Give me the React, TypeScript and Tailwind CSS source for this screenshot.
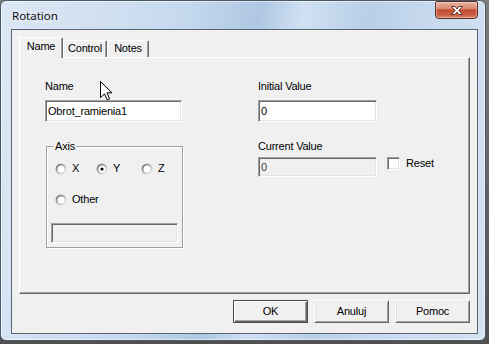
import React from "react";

function Radio({ checked }: { checked?: boolean }) {
  return (
    <svg width="12" height="12" viewBox="0 0 12 12" className="shrink-0">
      <defs>
        <linearGradient id="rg" x1="0" y1="0" x2="1" y2="1">
          <stop offset="0" stopColor="#808080" />
          <stop offset="0.5" stopColor="#b0b0b0" />
          <stop offset="1" stopColor="#ffffff" />
        </linearGradient>
        <linearGradient id="rg2" x1="0" y1="0" x2="1" y2="1">
          <stop offset="0" stopColor="#505050" />
          <stop offset="0.55" stopColor="#c8c8c8" />
          <stop offset="1" stopColor="#e8e8e8" />
        </linearGradient>
      </defs>
      <circle cx="6" cy="6" r="5.5" fill="url(#rg)" />
      <circle cx="6" cy="6" r="4.5" fill="url(#rg2)" />
      <circle cx="6" cy="6" r="3.5" fill="#ffffff" />
      {checked && <circle cx="6" cy="6" r="1.6" fill="#000" />}
    </svg>
  );
}

const sunken =
  "border border-t-[#a0a0a0] border-l-[#a0a0a0] border-r-white border-b-white shadow-[inset_1px_1px_0_#696969,inset_-1px_-1px_0_#e3e3e3]";

function Btn({ label, def }: { label: string; def?: boolean }) {
  return (
    <div
      className={
        def
          ? "w-[75px] h-[23px] flex items-center justify-center bg-[#f0f0f0] border border-[#4a4a4a] shadow-[inset_1px_1px_0_#ffffff,inset_-1px_-1px_0_#696969,inset_-2px_-2px_0_#a0a0a0]"
          : "w-[75px] h-[23px] flex items-center justify-center bg-[#f0f0f0] border border-t-white border-l-white border-r-[#696969] border-b-[#696969] shadow-[inset_1px_1px_0_#e3e3e3,inset_-1px_-1px_0_#a0a0a0]"
      }
    >
      <span className="leading-[13px]">{label}</span>
    </div>
  );
}

export default function App() {
  return (
    <div className="relative w-[489px] h-[344px] bg-[linear-gradient(180deg,#7c7c7c,#505050)] overflow-hidden font-['Liberation_Sans',Arial,sans-serif] text-[11px] tracking-[-0.2px] text-black">
      <div className="relative w-[486px] h-[341px] rounded-[6px] border border-[#4d5866] bg-[linear-gradient(100deg,#dbe7f4_0%,#d0e0f1_20%,#c4d8ee_35%,#afc7e3_48%,#cfe0f2_56%,#b9cfe8_68%,#c9dbef_82%,#d5e3f2_100%)] shadow-[inset_0_0_0_1px_rgba(255,255,255,0.55)] flex flex-col">
        {/* title bar */}
        <div className="h-[28px] flex items-start justify-between shrink-0">
          <div className="pl-[11px] pt-[7px] font-['Noto_Sans',sans-serif] text-[11.5px] tracking-normal leading-[16px] text-[#0d0d0d] [text-shadow:0_0_6px_#ffffff]">
            Rotation
          </div>
          <div className="mr-[7px] w-[43px] h-[18px] rounded-b-[4px] rounded-t-[2px] border border-[#5b2a22] bg-[linear-gradient(180deg,#eab2a4_0%,#dc8b76_40%,#c24a33_50%,#cc5d44_80%,#d98a6f_100%)] shadow-[inset_0_0_0_1px_rgba(255,255,255,0.35)] flex items-center justify-center">
            <svg width="14" height="11" viewBox="0 0 14 11">
              <path
                d="M1.5 1.5 H5 L7 4 L9 1.5 H12.5 L8.8 5.5 L12.5 9.5 H9 L7 7 L5 9.5 H1.5 L5.2 5.5 Z"
                fill="#ffffff"
                stroke="#4a2a26"
                strokeWidth="0.9"
                strokeLinejoin="round"
              />
            </svg>
          </div>
        </div>
        {/* client */}
        <div className="ml-[10px] mr-[7px] mb-[6px] flex-1 border border-[#5a6572] bg-[#f0f0f0] flex flex-col px-[7px] pt-[7px]">
          {/* tabs */}
          <div className="flex items-end h-[20px]">
            <div className="relative z-10 -mb-px h-[21px] w-[44px] bg-[#f0f0f0] border-l border-t border-r border-l-white border-t-white border-r-[#696969] rounded-tr-[2px] shadow-[inset_-1px_0_0_#a0a0a0] flex justify-center pt-[2px]">
              <span className="leading-[13px]">Name</span>
            </div>
            <div className="h-[17px] w-[44px] border-l border-t border-r border-l-white border-t-white border-r-[#696969] rounded-tr-[2px] shadow-[inset_-1px_0_0_#a0a0a0] flex justify-center pt-[1px]">
              <span className="leading-[13px]">Control</span>
            </div>
            <div className="h-[17px] w-[42px] border-l border-t border-r border-l-white border-t-white border-r-[#696969] rounded-tr-[2px] shadow-[inset_-1px_0_0_#a0a0a0] flex justify-center pt-[1px]">
              <span className="leading-[13px]">Notes</span>
            </div>
          </div>
          {/* panel */}
          <div className="h-[237px] border border-t-white border-l-white border-r-[#696969] border-b-[#696969] shadow-[inset_-1px_-1px_0_#a0a0a0] flex pl-[25px] pt-[22px]">
            {/* left column */}
            <div className="w-[213px] flex flex-col">
              <div className="leading-[13px] h-[13px]">Name</div>
              <div className={`mt-[7px] w-[137px] h-[22px] bg-white ${sunken} flex items-center pl-[2px]`}>
                <span className="leading-[13px]">Obrot_ramienia1</span>
              </div>
              <div className="relative mt-[24px] ml-[1px] w-[137px] h-[102px] border border-[#a0a0a0] shadow-[1px_1px_0_#ffffff,inset_1px_1px_0_#ffffff]">
                <div className="absolute -top-[7px] left-[7px] bg-[#f0f0f0] px-[1px] leading-[13px]">Axis</div>
                <div className="flex items-center pl-[8px] pt-[15px]">
                  <div className="w-[41px] flex items-center gap-[5px]">
                    <Radio />
                    <span className="leading-[13px]">X</span>
                  </div>
                  <div className="w-[45px] flex items-center gap-[5px]">
                    <Radio checked />
                    <span className="leading-[13px]">Y</span>
                  </div>
                  <div className="flex items-center gap-[5px]">
                    <Radio />
                    <span className="leading-[13px]">Z</span>
                  </div>
                </div>
                <div className="flex items-center pl-[8px] mt-[18px]">
                  <div className="flex items-center gap-[5px]">
                    <Radio />
                    <span className="leading-[13px]">Other</span>
                  </div>
                </div>
                <div className={`ml-[4px] mt-[17px] w-[127px] h-[20px] bg-[#f0f0f0] ${sunken}`} />
              </div>
            </div>
            {/* right column */}
            <div className="flex flex-col">
              <div className="leading-[13px] h-[13px]">Initial Value</div>
              <div className={`mt-[7px] w-[119px] h-[22px] bg-white ${sunken} flex items-center pl-[2px]`}>
                <span className="leading-[13px]">0</span>
              </div>
              <div className="mt-[18px] leading-[13px] h-[13px]">Current Value</div>
              <div className="mt-[4px] flex items-start">
                <div className={`w-[119px] h-[20px] bg-[#f0f0f0] ${sunken} flex items-center pl-[2px]`}>
                  <span className="leading-[13px] text-[#3a3a3a]">0</span>
                </div>
                <div className={`ml-[10px] w-[13px] h-[13px] bg-white ${sunken}`} />
                <span className="ml-[6px] leading-[13px]">Reset</span>
              </div>
            </div>
          </div>
          {/* buttons */}
          <div className="mt-[6px] flex justify-end gap-[6px]">
            <Btn label="OK" def />
            <Btn label="Anuluj" />
            <Btn label="Pomoc" />
          </div>
        </div>
      </div>
      {/* mouse cursor */}
      <svg
        className="absolute left-[100px] top-[81px]"
        width="13"
        height="20"
        viewBox="0 0 13 20"
      >
        <path
          d="M0.5 0.5 L0.5 16.5 L4.5 12.8 L7.2 18.8 L9.6 17.8 L7 11.8 L12 11.8 Z"
          fill="#ffffff"
          stroke="#000000"
          strokeWidth="1"
          strokeLinejoin="miter"
        />
      </svg>
    </div>
  );
}
